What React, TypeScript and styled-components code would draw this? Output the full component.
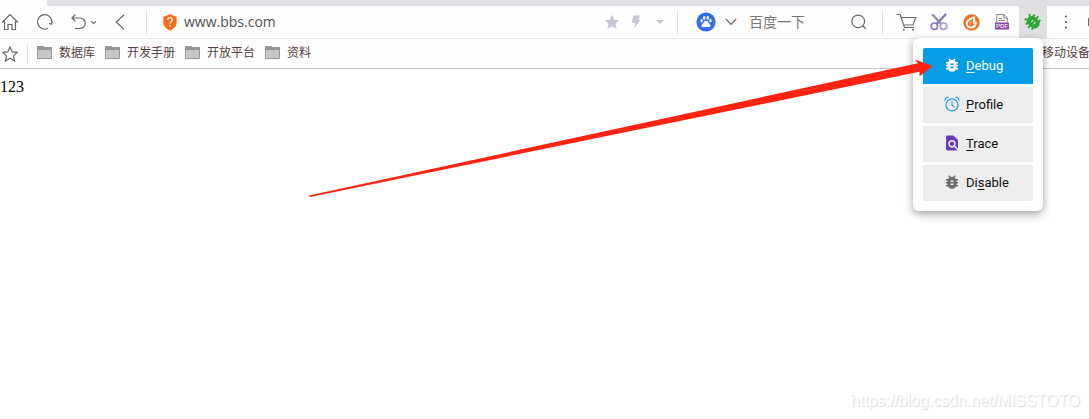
import React from 'react';
import styled, { createGlobalStyle } from 'styled-components';
import { MdBugReport, MdFindInPage } from 'react-icons/md';

const folders = [
  { name: '数据库', width: 68 },
  { name: '开发手册', width: 80 },
  { name: '开放平台', width: 80 },
  { name: '资料', width: 56 },
];

const HomeIcon = () => (
  <LineIcon width="18" height="18" viewBox="0 0 18 18">
    <path d="M1 9.5 L9 1.5 L17 9.5 M3.5 8 V16.5 H7 V11.5 H11 V16.5 H14.5 V8" />
  </LineIcon>
);

const ReloadIcon = () => (
  <LineIcon width="18" height="18" viewBox="0 0 18 18">
    <path d="M12.2 15.2 A7.2 7.2 0 1 1 15.7 10.6 M16.2 8.2 L15.5 11.2 L12.9 10.4" />
  </LineIcon>
);

const UndoIcon = () => (
  <LineIcon width="26" height="18" viewBox="0 0 26 18">
    <path d="M4.5 1.5 L1 5 L4.5 8.5 M1 5 H9 A5 5 0 0 1 9 15.5 H4" />
    <path d="M20 8.2 L22.5 10.7 L25 8.2" />
  </LineIcon>
);

const BackIcon = () => (
  <LineIcon width="10" height="16" viewBox="0 0 10 16">
    <path d="M9 0.7 L1.2 8 L9 15.3" />
  </LineIcon>
);

const ShieldIcon = () => (
  <svg width="14" height="17" viewBox="0 0 14 17">
    <path
      d="M7 0.3 L13.6 2.8 V9 C13.6 12.8 10 15.2 7 16.6 C4 15.2 0.4 12.8 0.4 9 V2.8 Z"
      fill="#fb6a16"
    />
    <path
      d="M4.8 6 C4.8 2.9 9.3 3 9.3 5.8 C9.3 7.6 7.1 7.5 7.1 9.7"
      fill="none"
      stroke="#fff"
      strokeWidth="1.3"
    />
    <circle cx="7.1" cy="12" r="0.9" fill="#fff" />
  </svg>
);

const StarIcon = () => (
  <svg width="16" height="16" viewBox="0 0 16 16">
    <path
      d="M8 0.8 L10.2 5.7 L15.4 6.2 L11.5 9.7 L12.6 14.9 L8 12.2 L3.4 14.9 L4.5 9.7 L0.6 6.2 L5.8 5.7 Z"
      fill="#c5c8d4"
    />
  </svg>
);

const BoltIcon = () => (
  <svg width="10" height="14" viewBox="0 0 10 14">
    <path d="M2.5 0.5 H9 L7.2 4.8 H9.5 L3.2 13.5 L4.2 7.8 H0.8 Z" fill="#c5c8d4" />
  </svg>
);

const PawIcon = () => (
  <svg width="20" height="20" viewBox="0 0 20 20">
    <circle cx="10" cy="10" r="9.6" fill="#306bee" />
    <g fill="#fff">
      <ellipse cx="5.6" cy="8.8" rx="1.3" ry="1.8" />
      <ellipse cx="8.2" cy="5.9" rx="1.3" ry="1.8" />
      <ellipse cx="11.8" cy="5.9" rx="1.3" ry="1.8" />
      <ellipse cx="14.4" cy="8.8" rx="1.3" ry="1.8" />
      <path d="M10 8.8 C12 8.8 12 10.7 13.7 12 C15.4 13.8 14.2 15.5 12.3 15.3 C10.6 15 9.4 15 7.7 15.3 C5.8 15.5 4.6 13.8 6.3 12 C8 10.7 8 8.8 10 8.8 Z" />
    </g>
  </svg>
);

const SearchIcon = () => (
  <LineIcon width="16" height="16" viewBox="0 0 16 16">
    <circle cx="7.2" cy="7.4" r="6.3" />
    <path d="M11.7 11.8 L14.8 14.8" />
  </LineIcon>
);

const CartIcon = () => (
  <LineIcon width="21" height="18" viewBox="0 0 21 18">
    <path d="M0.5 1.5 H4.2 L8.5 14.5 H18 M5.2 4.5 H19.7 L17 12 H7.8" />
    <g fill="#686868" stroke="none">
      <circle cx="7.8" cy="16.8" r="1" />
      <circle cx="17" cy="16.8" r="1" />
    </g>
  </LineIcon>
);

const ScissorsIcon = () => (
  <svg width="18" height="18" viewBox="0 0 18 18" fill="none">
    <path d="M2.2 1.3 L11.2 11" stroke="#8d92b4" strokeWidth="2.4" />
    <path d="M16 1 L6.6 11" stroke="#8775be" strokeWidth="2.4" />
    <circle cx="4.4" cy="13.2" r="3.2" stroke="#8a77c4" strokeWidth="1.7" />
    <circle cx="13.6" cy="13.2" r="3.2" stroke="#a99bd4" strokeWidth="1.7" />
  </svg>
);

const FlameIcon = () => (
  <svg width="17" height="17" viewBox="0 0 17 17">
    <circle cx="8.5" cy="8.5" r="8.2" fill="#f36f21" />
    <path
      d="M12.2 2.4 C7.6 2.9 2.8 5.6 2.9 9.4 C3 12.7 5.4 14.5 8.3 14.4 C12 14.2 14 11.4 13.8 7.4 L12.3 8.8 C13 6.6 11.4 4.8 12.2 2.4 Z"
      fill="#fff"
    />
    <path
      d="M10.1 4.6 C8 5.8 4.7 7.2 4.8 9.7 C4.9 11.7 6.6 12.8 8.4 12.6 C10.5 12.3 11.6 10.6 11.3 9.1 L9.9 10.4 C10.5 8.5 9.6 6.6 10.1 4.6 Z"
      fill="#f36f21"
    />
    <path d="M8.8 7 C7.8 8.6 6.9 9.1 7.2 10.6" fill="none" stroke="#fff" strokeWidth="0.8" />
  </svg>
);

const PdfIcon = () => (
  <svg width="14" height="16" viewBox="0 0 14 16">
    <path d="M1.8 8.5 V0.5 H9 L12.3 3.8 V8.5" fill="#fff" stroke="#858585" />
    <path d="M8.8 0.5 V4 H12.3 M4 4.5 H7 M4 6.5 H10" fill="none" stroke="#858585" />
    <rect y="8.5" width="14" height="7" fill="#8d48a4" />
    <text
      x="7"
      y="14.2"
      fill="#eadbf0"
      fontFamily="'Liberation Sans', sans-serif"
      fontSize="6"
      fontWeight="bold"
      textAnchor="middle"
    >
      PDF
    </text>
  </svg>
);

const GreenBugIcon = () => (
  <svg width="18" height="18" viewBox="0 0 18 18">
    <g transform="rotate(-48 9 9)">
      <path
        d="M2.4 5.4 H15.6 M1.4 9.2 H16.6 M2.4 13 H15.6 M5.4 1 L7.5 3.5 M12.6 1 L10.5 3.5"
        stroke="#2fa737"
        strokeWidth="1.9"
      />
      <rect x="3.9" y="2.6" width="10.2" height="13.6" rx="5" fill="#2fa737" />
      <path d="M7.6 7.8 H10.4 M7.6 10.8 H10.4" stroke="#d6eed6" strokeWidth="1" />
    </g>
  </svg>
);

const FolderIcon = () => (
  <svg width="15" height="14" viewBox="0 0 15 14">
    <path d="M0.5 0.5 H6 L7.2 1.5 H14.5 V12.5 H0.5 Z" fill="#c6c6c6" stroke="#979797" />
    <path d="M0.5 0.5 H6 L7.2 1.5 H14.5 V3.5 H0.5 Z" fill="#979797" stroke="#979797" />
  </svg>
);

const AlarmIcon = () => (
  <svg width="16" height="16" viewBox="0 0 16 16" fill="none" stroke="#2b9be6">
    <circle cx="8" cy="8.9" r="6" strokeWidth="1.3" />
    <path d="M8 5.3 V9.2 L10.7 11" strokeWidth="1.1" />
    <path d="M0.9 4.6 C1.1 2.6 2.4 1.4 4.3 1.2 M15.1 4.6 C14.9 2.6 13.6 1.4 11.7 1.2" strokeWidth="1.3" />
  </svg>
);

const App = () => {
  return (
    <>
      <GlobalStyle />
      <Browser>
        <TabStrip />
        <Toolbar>
          <Slot width={20}><HomeIcon /></Slot>
          <Slot width={50}><ReloadIcon /></Slot>
          <Slot width={28}><UndoIcon /></Slot>
          <Slot width={44}><BackIcon /></Slot>
          <AddressBar>
            <ShieldIcon />
            <Address>www.bbs.com</Address>
            <Slot width={24}><StarIcon /></Slot>
            <Slot width={24}><BoltIcon /></Slot>
            <Slot width={24}><Caret /></Slot>
          </AddressBar>
          <SearchBar>
            <PawIcon />
            <Slot width={30}>
              <LineIcon width="12" height="8" viewBox="0 0 12 8">
                <path d="M0.8 1 L6 6.4 L11.2 1" />
              </LineIcon>
            </Slot>
            <SearchHint>百度一下</SearchHint>
            <SearchIcon />
          </SearchBar>
          <Extensions>
            <Slot width={33}><CartIcon /></Slot>
            <Slot width={32}><ScissorsIcon /></Slot>
            <Slot width={32}><FlameIcon /></Slot>
            <Slot width={30}><PdfIcon /></Slot>
            <ActiveSlot width={28}>
              <GreenBugIcon />
              <Menu>
                <MenuItem primary>
                  <MdBugReport size={18} />
                  <span><u>D</u>ebug</span>
                </MenuItem>
                <MenuItem>
                  <AlarmIcon />
                  <span><u>P</u>rofile</span>
                </MenuItem>
                <MenuItem>
                  <MdFindInPage size={18} color="#673ab7" />
                  <span><u>T</u>race</span>
                </MenuItem>
                <MenuItem>
                  <MdBugReport size={18} color="#6b6b6b" />
                  <span>Di<u>s</u>able</span>
                </MenuItem>
              </Menu>
            </ActiveSlot>
            <Slot width={38}>
              <svg width="4" height="14" viewBox="0 0 4 14" fill="#666">
                <circle cx="2" cy="1.5" r="1.1" />
                <circle cx="2" cy="7" r="1.1" />
                <circle cx="2" cy="12.5" r="1.1" />
              </svg>
            </Slot>
            <EdgeMark />
          </Extensions>
        </Toolbar>
        <Bookmarks>
          <FavoriteSlot>
            <LineIcon width="16" height="16" viewBox="0 0 16 16">
              <path d="M8 1 L10.2 5.9 L15.3 6.4 L11.5 9.9 L12.6 15 L8 12.3 L3.4 15 L4.5 9.9 L0.7 6.4 L5.8 5.9 Z" />
            </LineIcon>
          </FavoriteSlot>
          {folders.map(folder => (
            <Folder key={folder.name} width={folder.width}>
              <FolderIcon />
              <Label>{folder.name}</Label>
            </Folder>
          ))}
          <MobileLink>移动设备</MobileLink>
        </Bookmarks>
        <Page>123</Page>
        <Watermark>https://blog.csdn.net/MISSTOTO</Watermark>
        <Arrow width="1089" height="419" viewBox="0 0 1089 419">
          <path
            d="M309 195.6 L918 63.2 L915 59.4 L932.5 66 L919.5 76.5 L919.5 71.8 L310 197 Z"
            fill="#ff2412"
          />
        </Arrow>
      </Browser>
    </>
  );
};

export default App;

const GlobalStyle = createGlobalStyle`
  * {
    box-sizing: border-box;
  }

  body {
    margin: 0;
    background: #fff;
    overflow: hidden;
  }

  svg {
    display: block;
    flex-shrink: 0;
  }
`;

const Browser = styled.div`
  position: relative;
  display: flex;
  flex-direction: column;
  width: 1089px;
  height: 419px;
  overflow: hidden;
  font-family: 'Noto Sans', 'Noto Sans CJK SC', sans-serif;
`;

const TabStrip = styled.div`
  height: 6px;
  margin-left: 47px;
  background: #dfe0e5;
`;

const Toolbar = styled.div`
  display: flex;
  align-items: center;
  height: 33px;
  border-bottom: 1px solid #e6e6e8;
  background: #fefefe;
`;

const LineIcon = styled.svg`
  fill: none;
  stroke: #686868;
  stroke-width: 1.2;
`;

const Slot = styled.div<{ width: number }>`
  display: flex;
  flex-shrink: 0;
  align-items: center;
  justify-content: center;
  width: ${props => props.width}px;
  height: 32px;
`;

const ActiveSlot = styled(Slot)`
  position: relative;
  background: #e0e0e0;
`;

const AddressBar = styled.div`
  display: flex;
  flex-shrink: 0;
  align-items: center;
  width: 532px;
  height: 24px;
  margin-left: 4px;
  padding: 0 5px 0 16px;
  border-left: 1px solid #e2e2e9;
  border-right: 1px solid #e2e2e9;
`;

const Address = styled.div`
  flex: 1;
  padding-left: 7px;
  font-family: 'Open Sans', sans-serif;
  font-size: 14px;
  line-height: 20px;
  color: #505050;
`;

const SearchBar = styled.div`
  display: flex;
  flex-shrink: 0;
  align-items: center;
  width: 205px;
  height: 24px;
  padding: 0 15px 0 18px;
  border-right: 1px solid #e2e2e9;
`;

const SearchHint = styled.div`
  flex: 1;
  padding-left: 3px;
  font-size: 14px;
  line-height: 20px;
  color: #777;
`;

const Extensions = styled.div`
  display: flex;
  flex-shrink: 0;
  align-items: center;
  margin-left: 7px;

  ${ActiveSlot} {
    margin-left: 2px;
  }
`;

const Caret = styled.div`
  border: 4px solid transparent;
  border-top-color: #c5c8d4;
  border-bottom: 0;
`;

const EdgeMark = styled.div`
  width: 4px;
  height: 8px;
  margin-left: 3px;
  background: #7b6d60;
`;

const Bookmarks = styled.div`
  display: flex;
  align-items: center;
  height: 30px;
  border-bottom: 1px solid #cbc5c5;
  background: #fefefe;
  font-size: 12px;
  color: #54403c;
`;

const FavoriteSlot = styled.div`
  display: flex;
  align-items: center;
  width: 28px;
  height: 20px;
  margin-right: 9px;
  padding-left: 2px;
  border-right: 1px solid #e2e2e9;
`;

const Folder = styled.div<{ width: number }>`
  display: flex;
  align-items: center;
  gap: 7px;
  width: ${props => props.width}px;
  padding-bottom: 2px;
`;

const Label = styled.span`
  line-height: 18px;
  white-space: nowrap;
`;

const MobileLink = styled(Label)`
  width: 47px;
  margin-left: auto;
  padding-bottom: 2px;
`;

const Page = styled.div`
  flex: 1;
  padding: 9px 0 0;
  font-family: 'Liberation Serif', serif;
  font-size: 16px;
  line-height: 18px;
  color: #000;
`;

const Menu = styled.div`
  position: absolute;
  z-index: 1;
  top: 32px;
  right: 4px;
  display: flex;
  flex-direction: column;
  gap: 3px;
  width: 130px;
  padding: 10px;
  border-radius: 6px;
  background: #fff;
  box-shadow: 0 3px 9px rgba(0, 0, 0, 0.38);
`;

const MenuItem = styled.div<{ primary?: boolean }>`
  display: flex;
  align-items: center;
  height: 36px;
  padding: 0 0 2px 20px;
  background: ${props => (props.primary ? '#069ce6' : '#ededed')};
  color: ${props => (props.primary ? '#fff' : '#111')};
  font-family: Roboto, sans-serif;
  font-size: 13px;

  svg {
    width: 18px;
  }

  span {
    margin-left: 5px;
  }

  u {
    text-underline-offset: 2px;
  }

  &:first-child {
    border-radius: 2px 2px 0 0;
  }

  &:last-child {
    border-radius: 0 0 2px 2px;
  }
`;

const Arrow = styled.svg`
  position: absolute;
  z-index: 2;
  top: 0;
  left: 0;
  pointer-events: none;
`;

const Watermark = styled.div`
  align-self: flex-end;
  height: 28px;
  margin-right: 9px;
  font-family: 'Liberation Sans', sans-serif;
  font-size: 16px;
  line-height: 20px;
  letter-spacing: -0.05px;
  color: #fff;
  text-shadow: 1px 1px 1px #d8d8d8;
`;
